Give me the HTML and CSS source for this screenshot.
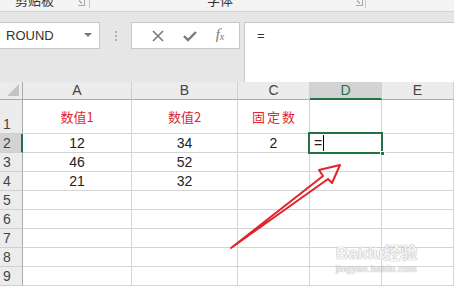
FILE: index.html
```html
<!DOCTYPE html>
<html lang="zh-CN">
<head>
  <meta charset="UTF-8">
  <meta name="viewport" content="width=device-width, initial-scale=1.0">
  <title>Excel</title>
  <link rel="stylesheet" href="styles.css">
</head>
<body>
  <div class="app">
    <!-- ribbon group labels, cut off at the top -->
    <div class="ribbon">
      <span class="group-name clip">剪贴板</span>
      <span class="launcher l1"></span>
      <span class="group-sep s1"></span>
      <span class="group-name font">字体</span>
      <span class="launcher l2"></span>
      <span class="group-sep s2"></span>
    </div>

    <!-- formula bar -->
    <div class="formula-bar">
      <div class="name-box">
        <span>ROUND</span>
        <span class="drop"></span>
      </div>
      <div class="grip"><i></i><i></i><i></i></div>
      <div class="fx-btns">
        <svg width="14" height="14" viewBox="0 0 14 14"><path d="M2 2 L12 12 M12 2 L2 12" stroke="#7a7a7a" stroke-width="1.6"/></svg>
        <svg width="16" height="14" viewBox="0 0 16 14"><path d="M2 7 L6 11 L14 3" stroke="#7a7a7a" stroke-width="2.4" fill="none"/></svg>
        <span class="fx"><i>f</i><sub>x</sub></span>
      </div>
      <div class="formula-input">=</div>
    </div>

    <!-- sheet -->
    <div class="sheet">
      <div class="hd corner"><span class="tri"></span></div>
      <div class="hd col">A</div>
      <div class="hd col">B</div>
      <div class="hd col">C</div>
      <div class="hd col cur">D</div>
      <div class="hd col">E</div>

      <div class="hd row">1</div>
      <div class="cell title">数值1</div>
      <div class="cell title">数值2</div>
      <div class="cell title wide">固定数</div>
      <div class="cell"></div>
      <div class="cell"></div>

      <div class="hd row cur">2</div>
      <div class="cell">12</div>
      <div class="cell">34</div>
      <div class="cell">2</div>
      <div class="cell edit">=<span class="caret"></span><span class="sel"><b></b></span></div>
      <div class="cell"></div>

      <div class="hd row">3</div>
      <div class="cell">46</div>
      <div class="cell">52</div>
      <div class="cell"></div>
      <div class="cell"></div>
      <div class="cell"></div>

      <div class="hd row">4</div>
      <div class="cell">21</div>
      <div class="cell">32</div>
      <div class="cell"></div>
      <div class="cell"></div>
      <div class="cell"></div>

      <div class="hd row">5</div>
      <div class="cell"></div><div class="cell"></div><div class="cell"></div><div class="cell"></div><div class="cell"></div>
      <div class="hd row">6</div>
      <div class="cell"></div><div class="cell"></div><div class="cell"></div><div class="cell"></div><div class="cell"></div>
      <div class="hd row">7</div>
      <div class="cell"></div><div class="cell"></div><div class="cell"></div><div class="cell"></div><div class="cell"></div>
      <div class="hd row">8</div>
      <div class="cell"></div><div class="cell"></div><div class="cell"></div><div class="cell"></div><div class="cell"></div>
      <div class="hd row">9</div>
      <div class="cell"></div><div class="cell"></div><div class="cell"></div><div class="cell"></div><div class="cell"></div>
    </div>

    <!-- hand drawn arrow -->
    <svg class="arrow" width="454" height="286" viewBox="0 0 454 286">
      <path d="M231 248 L323 176 L319 170 L340 165 L332 183 L328 179 Z" fill="none" stroke="#e1232b" stroke-width="2" stroke-linejoin="round"/>
    </svg>

    <!-- watermark -->
    <div class="watermark">
      <div class="wm-logo">Bai<span class="paw">du</span>经验</div>
      <div class="wm-url">jingyan.baidu.com</div>
    </div>
  </div>
</body>
</html>
```

FILE: styles.css
```css
*{
  margin: 0;
  padding: 0;
  box-sizing: border-box;
}
body{
  background: #fff;
  font-family: "Liberation Sans", "Noto Sans CJK SC", sans-serif;
  color: #333;
}
.app{
  width: 454px;
  height: 286px;
  position: relative;
  overflow: hidden;
}

/* ribbon */
.ribbon{
  height: 12px;
  background: #f4f4f4;
  border-bottom: 1px solid #d2d2d2;
  position: relative;
  overflow: hidden;
  font-family: "Noto Sans CJK SC", sans-serif;
  font-size: 13px;
  color: #333;
}
.group-name{
  position: absolute;
  top: -8px;
  line-height: 16px;
}
.clip{ left: 15px; }
.font{ left: 207px; }
.launcher{
  position: absolute;
  top: 0;
  width: 7px;
  height: 6px;
  border-right: 1px solid #a8a8a8;
  border-bottom: 1px solid #a8a8a8;
}
.launcher::after{
  content: "";
  position: absolute;
  left: 1px;
  top: 0;
  width: 4px;
  height: 1px;
  background: #888;
  transform: rotate(45deg);
  transform-origin: left center;
}
.l1{ left: 78px; }
.l2{ left: 356px; }
.group-sep{
  position: absolute;
  top: 0;
  width: 1px;
  height: 8px;
  background: #c8c8c8;
}
.s1{ left: 89px; }
.s2{ left: 365px; }

/* formula bar */
.formula-bar{
  height: 70px;
  background: #e6e6e6;
  display: flex;
  align-items: flex-start;
  padding-top: 10px;
}
.name-box{
  width: 101px;
  height: 27px;
  margin-left: -1px;
  background: #fff;
  border: 1px solid #c6c6c6;
  display: flex;
  align-items: center;
  justify-content: space-between;
  padding: 0 7px 0 6px;
  font-size: 13px;
  color: #333;
}
.drop{
  width: 0;
  height: 0;
  border-left: 4px solid transparent;
  border-right: 4px solid transparent;
  border-top: 4px solid #777;
  margin-top: -2px;
}
.grip{
  width: 31px;
  height: 27px;
  display: flex;
  flex-direction: column;
  align-items: center;
  justify-content: center;
  gap: 2px;
}
.grip i{
  width: 2px;
  height: 2px;
  background: #b0b0b0;
}
.fx-btns{
  width: 109px;
  height: 27px;
  background: #fff;
  border: 1px solid #c6c6c6;
  display: flex;
  align-items: center;
  justify-content: space-around;
  padding: 0 6px 0 10px;
}
.fx{
  font-family: "Liberation Serif", serif;
  font-size: 15px;
  color: #777;
  line-height: 14px;
}
.fx sub{
  font-size: 10px;
  font-style: italic;
  vertical-align: -1px;
}
.formula-input{
  flex: 1;
  height: 60px;
  margin-left: 4px;
  background: #fff;
  border-left: 1px solid #c6c6c6;
  border-top: 1px solid #c6c6c6;
  padding: 5px 0 0 12px;
  font-size: 13px;
  color: #333;
}

/* sheet grid */
.sheet{
  display: grid;
  grid-template-columns: 23px 109px 106px 72px 72px 1fr;
  grid-template-rows: 18px 34px repeat(8, 19px);
  font-size: 14px;
}
.hd{
  background: #ececec;
  border-right: 1px solid #ababab;
  border-bottom: 1px solid #ababab;
  color: #444;
}
.col{
  display: flex;
  align-items: center;
  justify-content: center;
  border-right-color: #d0d0d0;
  line-height: 17px;
}
.row{
  display: flex;
  align-items: flex-end;
  padding-left: 3px;
  border-bottom-color: #d0d0d0;
  line-height: 17px;
}
.corner{
  position: relative;
}
.tri{
  position: absolute;
  right: 3px;
  bottom: 3px;
  width: 0;
  height: 0;
  border-left: 12px solid transparent;
  border-bottom: 12px solid #c4c4c4;
}
.hd.cur{
  background: #d3d3d3;
}
.col.cur{
  color: #217346;
  border-bottom: 2px solid #217346;
}
.row.cur{
  color: #444;
  border-right: 2px solid #217346;
}
.cell{
  border-right: 1px solid #d4d4d4;
  border-bottom: 1px solid #d4d4d4;
  display: flex;
  align-items: flex-end;
  justify-content: center;
  line-height: 17px;
  color: #222;
}
.title{
  align-items: center;
  font-family: "Noto Sans CJK SC", sans-serif;
  font-size: 13px;
  color: #e0282e;
}
.wide{
  letter-spacing: 2px;
  padding-left: 2px;
}
.edit{
  justify-content: flex-start;
  padding-left: 4px;
  position: relative;
}
.caret{
  width: 1px;
  height: 16px;
  background: #000;
  margin-left: 1px;
  margin-bottom: 1px;
}
.sel{
  position: absolute;
  left: -2px;
  top: -2px;
  right: -2px;
  bottom: -2px;
  border: 2px solid #217346;
}
.sel b{
  position: absolute;
  right: -4px;
  bottom: -4px;
  width: 5px;
  height: 5px;
  background: #217346;
  border: 1px solid #fff;
}

/* overlays */
.arrow{
  position: absolute;
  left: 0;
  top: 0;
}
.watermark{
  position: absolute;
  left: 336px;
  top: 244px;
  color: rgba(255,255,255,0.9);
  text-shadow: 0 0 1px #aaa, 0 0 1px #aaa;
}
.wm-logo{
  font-family: "Liberation Sans", "Noto Sans CJK SC", sans-serif;
  font-size: 17px;
  font-weight: bold;
  line-height: 20px;
}
.wm-url{
  font-size: 9px;
  line-height: 10px;
  letter-spacing: 0.5px;
}
```
